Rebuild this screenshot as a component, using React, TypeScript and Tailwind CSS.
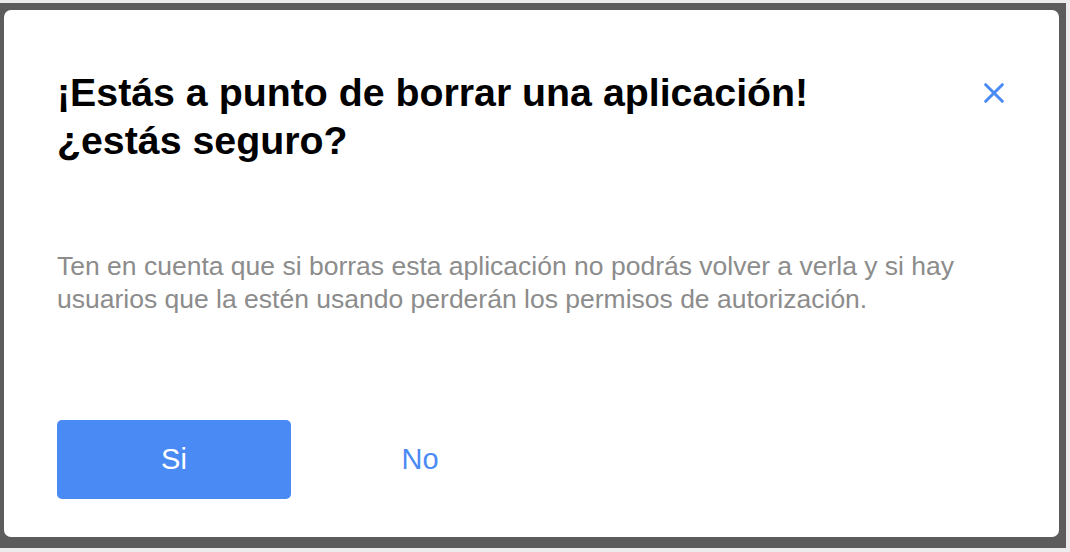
export default function App() {
  return (
    <div className="w-[1070px] h-[552px] bg-[#ececec] overflow-hidden font-['Liberation_Sans',Arial,sans-serif]">
      <div className="w-[1066px] h-[545px] mt-[3px] bg-[#5c5c5c] pt-[7px] pl-[4px]">
        <div className="w-[1055px] h-[527px] bg-white rounded-[7px] flex flex-col pl-[53px] pr-[55px]">
          {/* Header */}
          <div className="flex items-start justify-between pt-[58px]">
            <h2 className="text-[39.3px] leading-[48px] font-bold text-black">
              ¡Estás a punto de borrar una aplicación!
              <br />
              ¿estás seguro?
            </h2>
            <button className="mt-[15px] text-[#4a8af4]" aria-label="Cerrar">
              <svg width="20" height="20" viewBox="0 0 20 20" fill="none" stroke="currentColor" strokeWidth="3" strokeLinecap="round">
                <path d="M1.7 1.7L18.3 18.3M18.3 1.7L1.7 18.3" />
              </svg>
            </button>
          </div>

          {/* Body */}
          <p className="mt-[86px] text-[26.5px] leading-[33px] text-[#8c8c8c]">
            Ten en cuenta que si borras esta aplicación no podrás volver a verla y si hay
            <br />
            usuarios que la estén usando perderán los permisos de autorización.
          </p>

          {/* Actions */}
          <div className="mt-[104px] flex items-center">
            <button className="w-[234px] h-[79px] rounded-[5px] bg-[#4a8af4] text-white text-[29px]">
              Si
            </button>
            <button className="ml-[76px] w-[106px] h-[79px] text-[#4a8af4] text-[29px]">
              No
            </button>
          </div>
        </div>
      </div>
    </div>
  );
}
